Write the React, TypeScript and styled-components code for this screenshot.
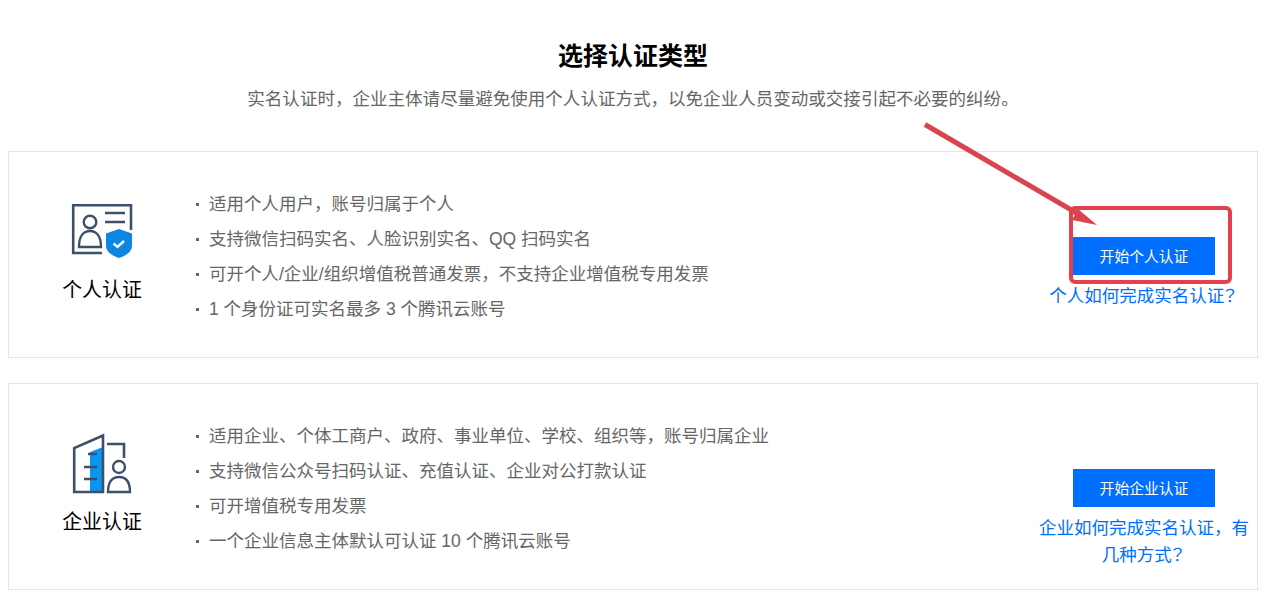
import React from "react";
import styled, { createGlobalStyle } from "styled-components";

const Global = createGlobalStyle`
  html, body { margin: 0; padding: 0; background: #fff; }
  body { font-family: "Liberation Sans", "Noto Sans CJK SC", sans-serif; }
`;

const Page = styled.div`
  position: relative;
  width: 1276px;
  height: 606px;
  overflow: hidden;
  padding: 0 18px 0 8px;
  box-sizing: border-box;
`;

const Header = styled.header`
  height: 151px;
  display: flex;
  flex-direction: column;
  align-items: center;
  padding-top: 40px;
  box-sizing: border-box;
`;

const Title = styled.h1`
  margin: 0;
  font-size: 25px;
  line-height: 32px;
  font-weight: 700;
  color: #000;
`;

const Subtitle = styled.p`
  margin: 14px 0 0;
  font-size: 17.55px;
  line-height: 26px;
  color: #666;
`;

const Cards = styled.div`
  display: flex;
  flex-direction: column;
  gap: 25px;
`;

const Card = styled.section`
  height: 207px;
  box-sizing: border-box;
  border: 1px solid #e5e5e5;
  display: grid;
  grid-template-columns: 187px 1fr 226px;
  align-items: center;
`;

const Brand = styled.div`
  display: flex;
  flex-direction: column;
  align-items: center;
  width: 186px;
  padding-bottom: 2px;
`;

const BrandIcon = styled.svg`
  width: 64px;
  height: 64px;
  display: block;
  overflow: visible;
`;

const BrandName = styled.div`
  margin-top: 9px;
  font-size: 19.9px;
  line-height: 28px;
  color: #000;
`;

const Features = styled.ul`
  list-style: none;
  margin: 0;
  padding: 3px 0 0;
  display: flex;
  flex-direction: column;
  gap: 9px;
`;

const Feature = styled.li`
  position: relative;
  padding-left: 13px;
  font-size: 17.5px;
  line-height: 26px;
  color: #666;

  &::before {
    content: "";
    position: absolute;
    left: 0;
    top: 12px;
    width: 3px;
    height: 3px;
    background: #666;
  }
`;

const Action = styled.div`
  align-self: start;
  display: flex;
  flex-direction: column;
  align-items: center;
  text-align: center;
  padding-top: 85px;
`;

const StartButton = styled.button`
  width: 142px;
  height: 38px;
  border: 0;
  padding: 0 0 2px;
  background: #006eff;
  color: #fff;
  font: inherit;
  font-size: 14.8px;
`;

const HelpLink = styled.a`
  display: block;
  margin-top: 8px;
  font-size: 17.5px;
  line-height: 27px;
  color: #006eff;
  width: 218px;
`;

const QuestionMark = styled.span`
  font-family: "Noto Sans CJK TC", sans-serif;
  line-height: 0;
  margin-left: -3px;
`;

const Overlay = styled.svg`
  position: absolute;
  left: 0;
  top: 0;
  width: 1276px;
  height: 606px;
  pointer-events: none;
`;

const ink = "#3d5068";

const PersonIcon = () => (
  <BrandIcon viewBox="0 0 64 64" fill="none">
    <path d="M32 50H3.200V2.200H61V27" stroke={ink} strokeWidth="2.600" />
    <path d="M35 10h20M35 19h20" stroke={ink} strokeWidth="2.600" />
    <circle cx="20" cy="19" r="6.300" stroke={ink} strokeWidth="2.400" />
    <path d="M9 44c0-10 4-16 11-16s11 6 11 16z" stroke={ink} strokeWidth="2.400" />
    <path d="M49 26l13 4.500v12c0 6.500-6 10-13 12.500-7-2.500-13-6-13-12.500v-12z" fill="#0b86e3" />
    <path d="M43.500 40.500l4 3.500 6.500-6" stroke="#fff" strokeWidth="2.400" />
  </BrandIcon>
);

const CompanyIcon = () => (
  <BrandIcon viewBox="0 0 64 64" fill="none">
    <path d="M20 17L33 12V57H20z" fill="#0a96f0" />
    <path d="M33 0.500L4.200 13V57H33z" stroke={ink} strokeWidth="2.600" />
    <path d="M18 19h9M14 32h13M14 44h13" stroke={ink} strokeWidth="2.600" />
    <path d="M37 9h17v14" stroke={ink} strokeWidth="2.600" />
    <circle cx="49" cy="32" r="6" stroke={ink} strokeWidth="2.400" />
    <path d="M38 57c0-10 4-15 11-15s11 5 11 15z" stroke={ink} strokeWidth="2.400" />
  </BrandIcon>
);

export default function App() {
  return (
    <Page>
      <Global />
      <Header>
        <Title>选择认证类型</Title>
        <Subtitle>实名认证时，企业主体请尽量避免使用个人认证方式，以免企业人员变动或交接引起不必要的纠纷。</Subtitle>
      </Header>
      <Cards>
        <Card>
          <Brand>
            <PersonIcon />
            <BrandName>个人认证</BrandName>
          </Brand>
          <Features>
            <Feature>适用个人用户，账号归属于个人</Feature>
            <Feature>支持微信扫码实名、人脸识别实名、QQ 扫码实名</Feature>
            <Feature>可开个人/企业/组织增值税普通发票，不支持企业增值税专用发票</Feature>
            <Feature>1 个身份证可实名最多 3 个腾讯云账号</Feature>
          </Features>
          <Action>
            <StartButton>开始个人认证</StartButton>
            <HelpLink>个人如何完成实名认证<QuestionMark>？</QuestionMark></HelpLink>
          </Action>
        </Card>
        <Card>
          <Brand>
            <CompanyIcon />
            <BrandName>企业认证</BrandName>
          </Brand>
          <Features>
            <Feature>适用企业、个体工商户、政府、事业单位、学校、组织等，账号归属企业</Feature>
            <Feature>支持微信公众号扫码认证、充值认证、企业对公打款认证</Feature>
            <Feature>可开增值税专用发票</Feature>
            <Feature>一个企业信息主体默认可认证 10 个腾讯云账号</Feature>
          </Features>
          <Action>
            <StartButton>开始企业认证</StartButton>
            <HelpLink>企业如何完成实名认证，有几种方式<QuestionMark>？</QuestionMark></HelpLink>
          </Action>
        </Card>
      </Cards>
      <Overlay viewBox="0 0 1276 606" fill="none">
        <rect x="1071" y="208" width="159" height="74" rx="4" stroke="#e5404d" strokeWidth="4" />
        <path d="M925 124.500L1080 215" stroke="#d9444e" strokeWidth="5" />
        <path d="M1097 225L1072 220 1078 209z" fill="#d9444e" />
      </Overlay>
    </Page>
  );
}
